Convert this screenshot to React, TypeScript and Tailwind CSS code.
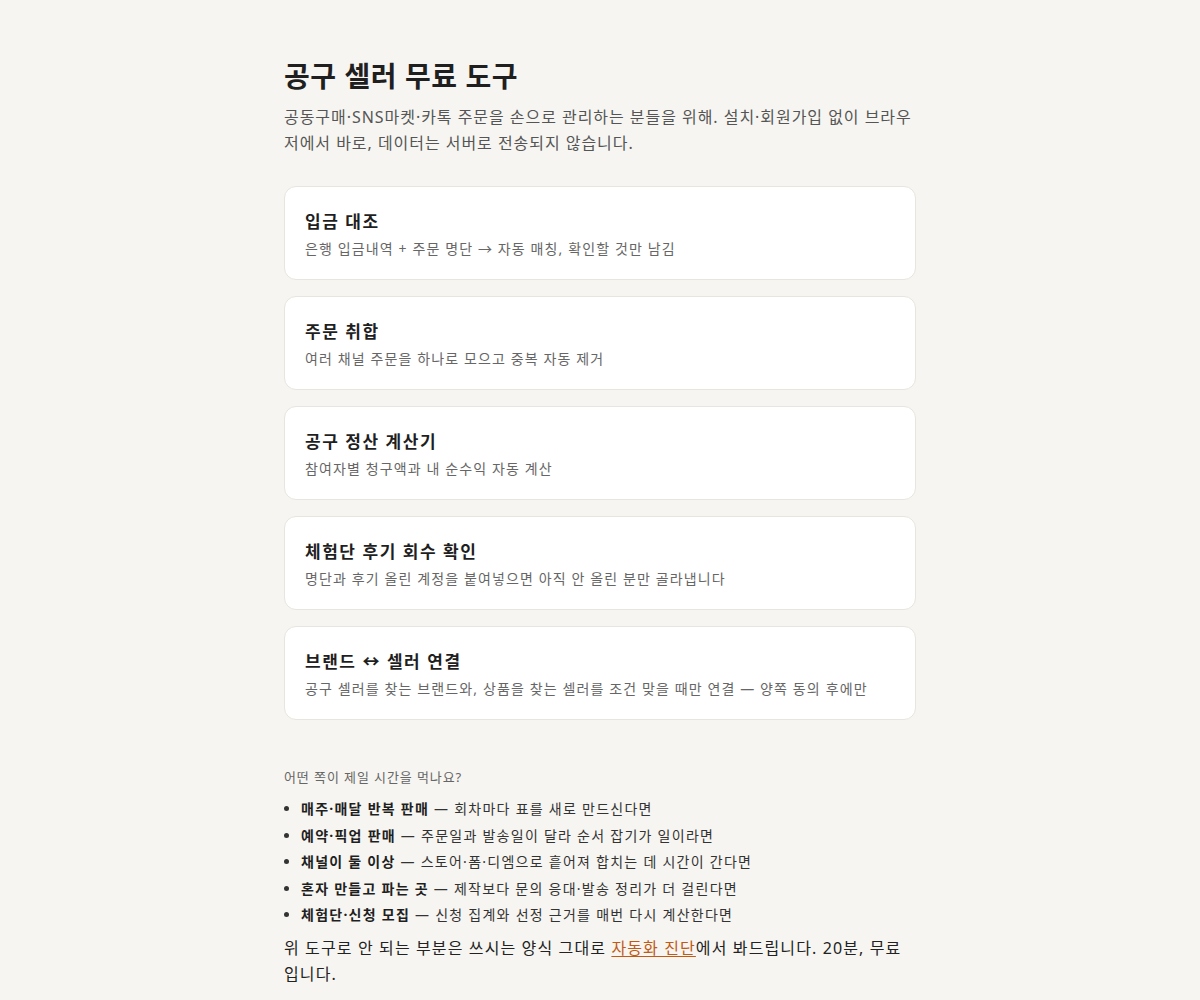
const tools = [
  { title: "입금 대조", desc: "은행 입금내역 + 주문 명단 → 자동 매칭, 확인할 것만 남김" },
  { title: "주문 취합", desc: "여러 채널 주문을 하나로 모으고 중복 자동 제거" },
  { title: "공구 정산 계산기", desc: "참여자별 청구액과 내 순수익 자동 계산" },
  { title: "체험단 후기 회수 확인", desc: "명단과 후기 올린 계정을 붙여넣으면 아직 안 올린 분만 골라냅니다" },
  { title: "브랜드 ↔ 셀러 연결", desc: "공구 셀러를 찾는 브랜드와, 상품을 찾는 셀러를 조건 맞을 때만 연결 — 양쪽 동의 후에만" },
];

const cases = [
  { label: "매주·매달 반복 판매", text: "회차마다 표를 새로 만드신다면" },
  { label: "예약·픽업 판매", text: "주문일과 발송일이 달라 순서 잡기가 일이라면" },
  { label: "채널이 둘 이상", text: "스토어·폼·디엠으로 흩어져 합치는 데 시간이 간다면" },
  { label: "혼자 만들고 파는 곳", text: "제작보다 문의 응대·발송 정리가 더 걸린다면" },
  { label: "체험단·신청 모집", text: "신청 집계와 선정 근거를 매번 다시 계산한다면" },
];

export default function App() {
  return (
    <div className="min-h-screen bg-[#f6f5f1] font-['Noto_Sans','Noto_Sans_CJK_KR',sans-serif] text-[#1f1f1f]">
      <main className="mx-auto max-w-[680px] px-6 pt-[56px] pb-10">
        <h1 className="text-[28px] font-bold leading-[40px] tracking-[0.02em]">공구 셀러 무료 도구</h1>
        <p className="mt-[8px] text-[16px] leading-[26px] tracking-[0.06em] text-[#555]">
          공동구매·SNS마켓·카톡 주문을 손으로 관리하는 분들을 위해. 설치·회원가입 없이 브라우저에서 바로, 데이터는 서버로 전송되지 않습니다.
        </p>

        <div className="mt-[30px] flex flex-col gap-[16px]">
          {tools.map((t) => (
            <a
              key={t.title}
              href="#"
              className="block rounded-[12px] border border-[#e8e5de] bg-white px-5 pt-[23px] pb-[20px]"
            >
              <div className="text-[17px] font-semibold leading-6 tracking-[0.09em] text-[#1f1f1f]">
                {t.title}
              </div>
              <div className="mt-[5px] text-[14px] leading-5 tracking-[0.08em] text-[#666]">{t.desc}</div>
            </a>
          ))}
        </div>

        <p className="mt-[47px] text-[13px] leading-5 tracking-[0.07em] text-[#666]">어떤 쪽이 제일 시간을 먹나요?</p>
        <ul className="mt-[9px] list-disc pl-[17px] text-[14px] leading-[26.5px] tracking-[0.09em] text-[#333]">
          {cases.map((c) => (
            <li key={c.label}>
              <strong className="font-bold text-[#1f1f1f]">{c.label}</strong> — {c.text}
            </li>
          ))}
        </ul>
        <p className="mt-[6px] text-[16px] leading-[26px] tracking-[0.07em] text-[#222]">
          위 도구로 안 되는 부분은 쓰시는 양식 그대로{" "}
          <a href="#" className="text-[#c05a14] underline underline-offset-2">
            자동화 진단
          </a>
          에서 봐드립니다. 20분, 무료입니다.
        </p>
      </main>
    </div>
  );
}
